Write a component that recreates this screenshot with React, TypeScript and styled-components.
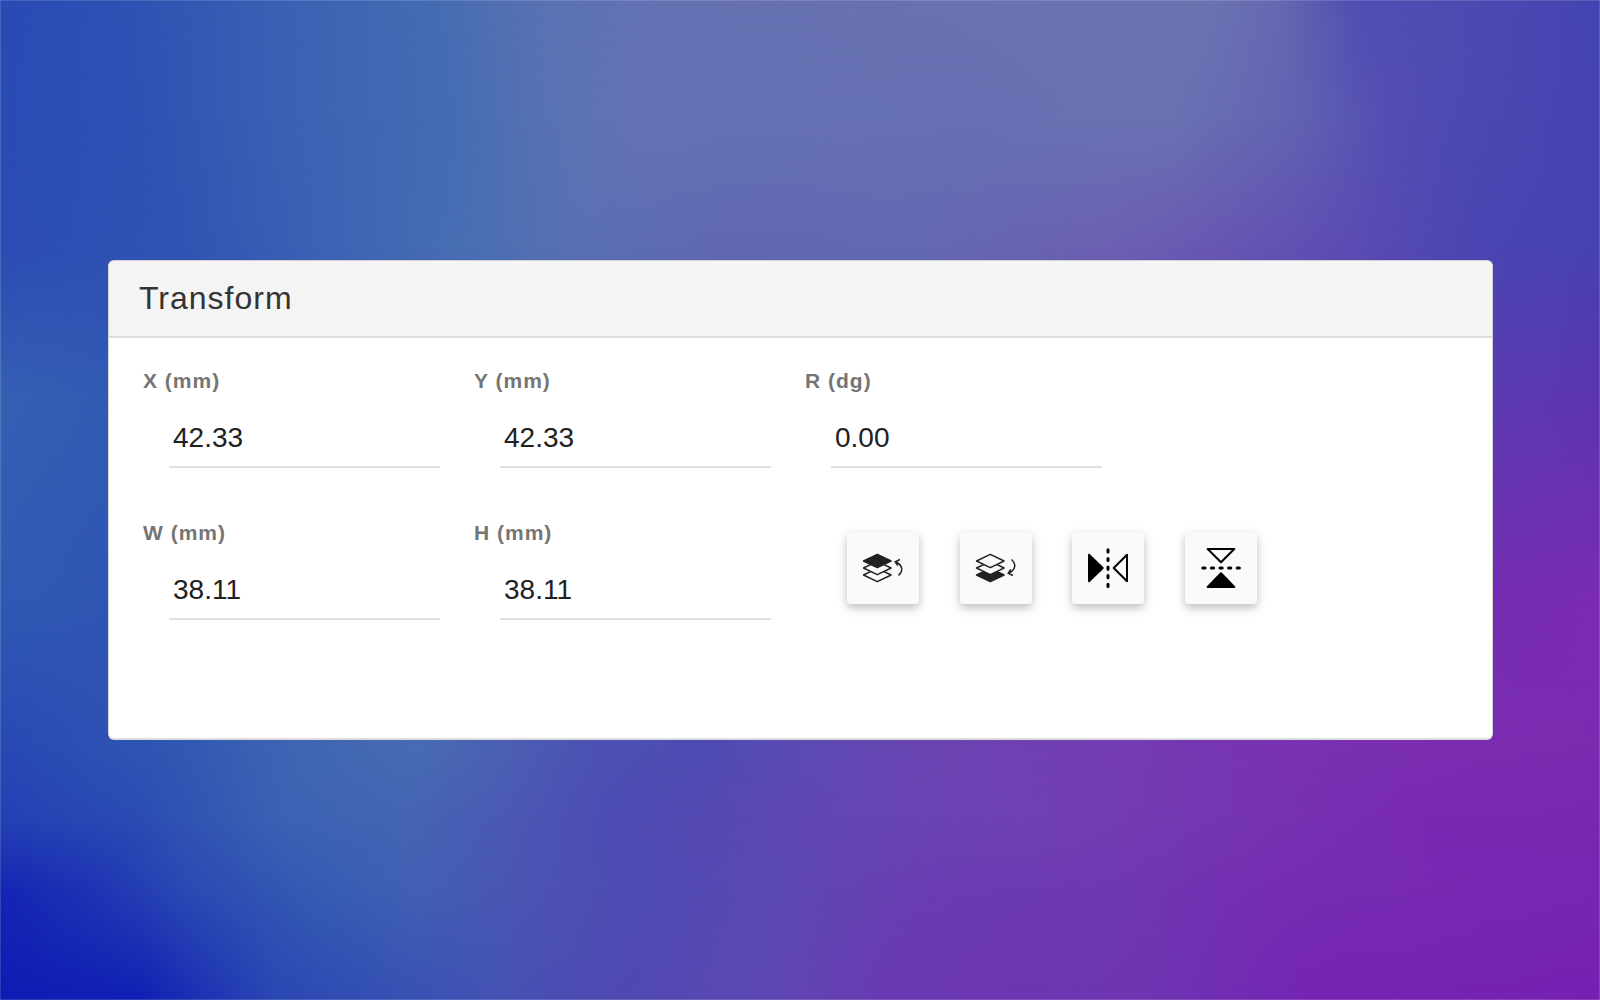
import React, { useId, useState } from "react";
import styled, { createGlobalStyle } from "styled-components";

const GlobalStyle = createGlobalStyle`
  *, *::before, *::after { box-sizing: border-box; }
  body {
    margin: 0;
    font-family: "Liberation Sans", Arial, sans-serif;
    color: #212121;
  }
`;

const Page = styled.div`
  display: grid;
  grid-template-columns: minmax(0, 1fr);
  min-height: 100vh;
`;

/* Each band blends into the one above it, so the backdrop reads as a colour mesh. */
const Band = styled.div<{ $stops: string; $from: number; $to: number }>`
  grid-area: 1 / 1;
  background: linear-gradient(to right, ${(p) => p.$stops});
  mask-image: linear-gradient(
    to bottom,
    ${(p) => (p.$to === 0 ? "#000" : "transparent")} ${(p) => p.$from}%,
    #000 ${(p) => p.$to}%
  );
`;

const Stage = styled.main`
  grid-area: 1 / 1;
  position: relative;
  display: flex;
  align-items: center;
  padding: 0 107px 0 108px;
  box-shadow: inset 0 0 0 1px rgba(255, 255, 255, 0.14);
`;

const Card = styled.section`
  flex: 1;
  min-width: 0;
  min-height: 480px;
  overflow: hidden;
  background: #fff;
  border: 1px solid #d4d4d4;
  border-bottom: 2px solid #dcdcdc;
  border-radius: 6px;
`;

const CardHeader = styled.header`
  padding: 17px 30px 18px;
  background: #f4f4f4;
  border-bottom: 2px solid #dcdcdc;
`;

const Title = styled.h1`
  margin: 0;
  font-size: 32px;
  line-height: 40px;
  font-weight: 400;
  letter-spacing: 1px;
  color: #333;
`;

const Form = styled.form`
  display: grid;
  grid-template-columns: repeat(4, minmax(0, 1fr));
  row-gap: 49px;
  padding: 27px 25px 27px 34px;
`;

const Field = styled.div`
  display: flex;
  flex-direction: column;
  gap: 11px;
  padding-right: 34px;
`;

const Label = styled.label`
  font-size: 21px;
  line-height: 32px;
  font-weight: 700;
  letter-spacing: 1px;
  color: #757575;
`;

const Input = styled.input`
  display: block;
  min-width: 0;
  height: 60px;
  margin-left: 26px;
  padding: 8px 4px 6px;
  border: 0;
  border-bottom: 2px solid #e0e0e0;
  border-radius: 0;
  background: transparent;
  font: inherit;
  font-size: 28px;
  font-kerning: normal;
  color: #212121;
  outline: none;
`;

const Actions = styled.div`
  grid-column: span 2;
  display: flex;
  justify-content: space-between;
  align-items: flex-start;
  max-width: 452px;
  padding: 15px 0 0 42px;
`;

const IconButton = styled.button`
  flex: none;
  display: flex;
  align-items: center;
  justify-content: center;
  width: 72px;
  height: 72px;
  padding: 0;
  border: 0;
  border-radius: 4px;
  background: #fafafa;
  box-shadow: 0 4px 10px rgba(0, 0, 0, 0.26);
  cursor: pointer;

  svg { display: block; width: 48px; height: 48px; }
`;

const bands = [
  { from: 0, to: 0, stops: "#2a4ab5 0%, #2d52b4 8%, #3a62b3 18%, #446cb3 27%, #5a72b3 34%, #6672b3 42%, #6972b2 60%, #6b75b2 75%, #6768b2 80%, #514db2 85%, #4f4cb2 90%, #4444b2 100%" },
  { from: 0, to: 12, stops: "#2a4bb5 0%, #2d52b4 9%, #3a62b3 18%, #446cb3 28%, #5872b3 34%, #6572b3 40%, #6670b2 60%, #6a72b2 73%, #6262b2 81%, #534db2 87%, #4b48b2 93%, #4543b1 100%" },
  { from: 12, to: 25, stops: "#2c4cb4 0%, #2f53b3 11%, #3c62b4 20%, #486eb3 29%, #5a70b3 36%, #6068b2 45%, #6468b2 58%, #6c60b2 69%, #6856b2 76%, #5c4cb2 84%, #4b45b2 92%, #4741b1 100%" },
  { from: 25, to: 40, stops: "#3560b3 0%, #3058b3 10%, #5c3cb0 92%, #5c34b0 100%" },
  { from: 40, to: 60, stops: "#2f5ab3 0%, #2f54b3 10%, #742cb2 92%, #7a2cb2 100%" },
  { from: 60, to: 75, stops: "#2848b4 0%, #3057b3 11%, #3e65b3 18%, #486cb3 26%, #4c5eb3 32%, #4c50b3 38%, #4e4bb3 44%, #5e4ab2 51%, #6c44b2 59%, #743cb2 70%, #7a30b2 82%, #7b2bb0 100%" },
  { from: 75, to: 82, stops: "#2440b4 0%, #2a4ab3 8%, #3c62b3 18%, #4464b3 25%, #4c58b3 32%, #4c4cb3 38%, #5848b2 46%, #6446b2 53%, #7040b2 65%, #7634b2 78%, #7828b2 90%, #7828b0 100%" },
  { from: 82, to: 89, stops: "#1425b3 0%, #1e34b4 6%, #2c4ab3 12%, #355cb3 20%, #4260b3 26%, #4c54b2 33%, #4e4ab3 40%, #5c48b2 49%, #6a3cb2 58%, #6e38b2 70%, #762cb2 80%, #7726b2 100%" },
  { from: 89, to: 100, stops: "#0e1cb3 0%, #1020b3 9%, #2a46b3 17%, #3450b3 24%, #4452b3 31%, #5048b2 39%, #5e48b2 48%, #6a38b2 56%, #6e34b2 72%, #7424b2 82%, #7520b2 100%" },
];

const layerPath = (cy: number) => `M4.500 ${cy} 18.300 ${cy - 6.7}l13.800 6.700-13.800 6.700z`;

const Layers = ({ solid }: { solid: "top" | "bottom" }) => (
  <g strokeWidth="1.4" strokeLinejoin="round">
    <path d={layerPath(31)} fill={solid === "bottom" ? "#212121" : "#fafafa"} />
    <path d={layerPath(24)} fill="#fafafa" />
    <path d={layerPath(17)} fill={solid === "top" ? "#212121" : "#fafafa"} />
  </g>
);

const BringForwardIcon = () => (
  <svg viewBox="0 0 48 48" fill="none" stroke="#212121" aria-hidden="true">
    <Layers solid="top" />
    <path d="M39.500 31.500c4.800-4.500 4.500-10-2.500-13.500M41 15.500l-4.800 2.200 2.600 4" strokeWidth="1.500" />
  </svg>
);

const SendBackwardIcon = () => (
  <svg viewBox="0 0 48 48" fill="none" stroke="#212121" aria-hidden="true">
    <Layers solid="bottom" />
    <path d="M39.500 15.500c4.800 4.500 4.500 10-2.500 13.500M41 31.500l-4.800-2.200 2.600-4" strokeWidth="1.500" />
  </svg>
);

const FlipShapes = () => (
  <>
    <path d="M5 10.700v26.600L18.700 24z" fill="#000" strokeLinejoin="round" />
    <path d="M43 10.700v26.600L29.700 24z" strokeLinejoin="round" />
    <path d="M24 5.800v36.800" strokeWidth="3" strokeDasharray="2.200 6.400" strokeLinecap="round" />
  </>
);

const FlipHorizontalIcon = () => (
  <svg viewBox="0 0 48 48" fill="none" stroke="#000" strokeWidth="2" aria-hidden="true">
    <FlipShapes />
  </svg>
);

const FlipVerticalIcon = () => (
  <svg viewBox="0 0 48 48" fill="none" stroke="#000" strokeWidth="2" aria-hidden="true">
    <g transform="rotate(-90 24 24)">
      <FlipShapes />
    </g>
  </svg>
);

function NumberField({ label, initial }: { label: string; initial: string }) {
  const id = useId();
  const [value, setValue] = useState(initial);
  return (
    <Field>
      <Label htmlFor={id}>{label}</Label>
      <Input id={id} inputMode="decimal" value={value} onChange={(e) => setValue(e.target.value)} />
    </Field>
  );
}

const EmptyCell = styled.div``;

export default function App() {
  return (
    <Page>
      <GlobalStyle />
      {bands.map((b) => (
        <Band key={b.to} $stops={b.stops} $from={b.from} $to={b.to} />
      ))}
      <Stage>
        <Card>
          <CardHeader>
            <Title>Transform</Title>
          </CardHeader>
          <Form onSubmit={(e) => e.preventDefault()}>
            <NumberField label="X (mm)" initial="42.33" />
            <NumberField label="Y (mm)" initial="42.33" />
            <NumberField label="R (dg)" initial="0.00" />
            <EmptyCell />
            <NumberField label="W (mm)" initial="38.11" />
            <NumberField label="H (mm)" initial="38.11" />
            <Actions>
              <IconButton type="button" aria-label="Bring forward"><BringForwardIcon /></IconButton>
              <IconButton type="button" aria-label="Send backward"><SendBackwardIcon /></IconButton>
              <IconButton type="button" aria-label="Flip horizontally"><FlipHorizontalIcon /></IconButton>
              <IconButton type="button" aria-label="Flip vertically"><FlipVerticalIcon /></IconButton>
            </Actions>
          </Form>
        </Card>
      </Stage>
    </Page>
  );
}
